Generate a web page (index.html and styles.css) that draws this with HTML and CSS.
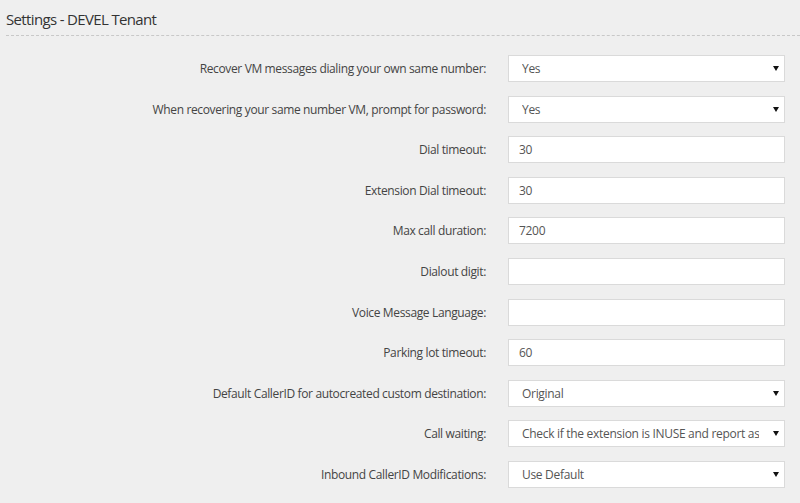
FILE: index.html
```html
<!DOCTYPE html>
<html lang="en">
<head>
    <meta charset="UTF-8">
    <meta name="viewport" content="width=device-width, initial-scale=1.0">
    <title>Settings - DEVEL Tenant</title>
    <link rel="stylesheet" href="styles.css">
</head>

<body>
    <h1 class="title">Settings - DEVEL Tenant</h1>

    <div class="settings-form">
        <label for="vm_same">Recover VM messages dialing your own same number:</label>
        <div class="select-wrap">
            <select id="vm_same"><option>Yes</option><option>No</option></select>
        </div>

        <label for="vm_password">When recovering your same number VM, prompt for password:</label>
        <div class="select-wrap">
            <select id="vm_password"><option>Yes</option><option>No</option></select>
        </div>

        <label for="dial_timeout">Dial timeout:</label>
        <input type="text" id="dial_timeout" value="30">

        <label for="ext_timeout">Extension Dial timeout:</label>
        <input type="text" id="ext_timeout" value="30">

        <label for="max_duration">Max call duration:</label>
        <input type="text" id="max_duration" value="7200">

        <label for="dialout_digit">Dialout digit:</label>
        <input type="text" id="dialout_digit" value="">

        <label for="vm_language">Voice Message Language:</label>
        <input type="text" id="vm_language" value="">

        <label for="parking_timeout">Parking lot timeout:</label>
        <input type="text" id="parking_timeout" value="60">

        <label for="default_callerid">Default CallerID for autocreated custom destination:</label>
        <div class="select-wrap">
            <select id="default_callerid"><option>Original</option></select>
        </div>

        <label for="call_waiting">Call waiting:</label>
        <div class="select-wrap">
            <select id="call_waiting"><option>Check if the extension is INUSE and report as busy</option></select>
        </div>

        <label for="inbound_cid">Inbound CallerID Modifications:</label>
        <div class="select-wrap">
            <select id="inbound_cid"><option>Use Default</option></select>
        </div>
    </div>
</body>
</html>
```

FILE: styles.css
```css
body {
    margin: 0;
    background-color: #efefef;
    font-family: "Open Sans", "Liberation Sans", sans-serif;
    color: #333;
}

.title {
    margin: 8px 0 0 6px;
    padding-bottom: 5px;
    font-size: 15px;
    font-weight: normal;
    line-height: 22px;
    letter-spacing: -0.65px;
    color: #333;
    border-bottom: 1px dashed #c8c8c8;
}

.settings-form {
    display: grid;
    grid-template-columns: 1fr 277px;
    column-gap: 22px;
    row-gap: 13.6px;
    align-items: center;
    padding: 19px 15px 0 0;
}

.settings-form label {
    text-align: right;
    font-size: 12px;
    letter-spacing: -0.36px;
    color: #444;
    white-space: nowrap;
}

input[type="text"], select {
    height: 27px;
    width: 100%;
    box-sizing: border-box;
    margin: 0;
    border: 1px solid #dadada;
    border-radius: 0;
    background: white;
    font-family: "Open Sans", "Liberation Sans", sans-serif;
    font-size: 12px;
    letter-spacing: -0.3px;
    color: #555;
    outline: none;
}

input[type="text"] {
    padding: 0 10px;
}

.select-wrap {
    position: relative;
}

.select-wrap select {
    display: block;
    appearance: none;
    -webkit-appearance: none;
    padding: 0 25px 0 13px;
}

.select-wrap::after {
    content: "";
    position: absolute;
    right: 6px;
    top: 11px;
    border-left: 3px solid transparent;
    border-right: 3px solid transparent;
    border-top: 5px solid #111;
    pointer-events: none;
}
```
